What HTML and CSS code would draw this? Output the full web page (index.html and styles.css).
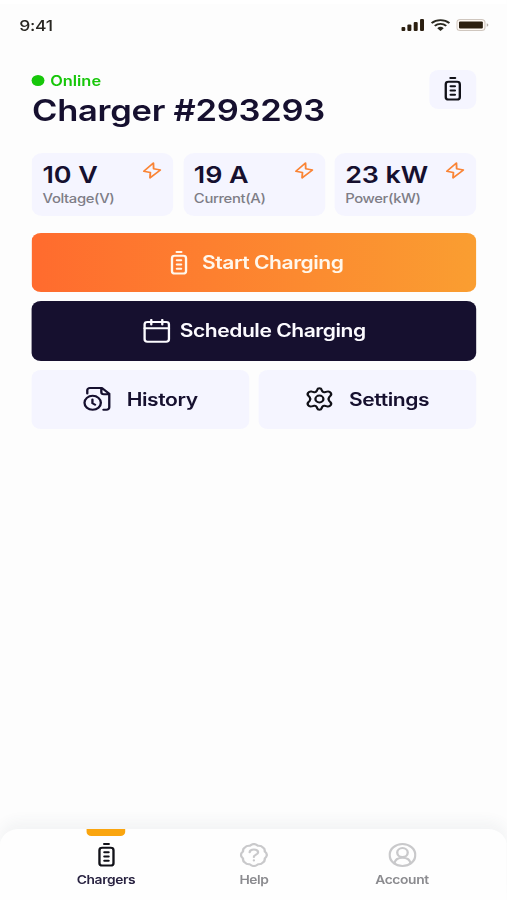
FILE: index.html
```html
<!DOCTYPE html>
<html lang="en">
<head>
<meta charset="utf-8">
<title>Charger</title>
<link rel="stylesheet" href="styles.css">
</head>
<body>
<svg class="defs" width="0" height="0" aria-hidden="true">
  <symbol id="battery" viewBox="0 0 24 24">
    <rect x="6" y="4.8" width="12" height="17.8" rx="2.4"/>
    <path d="M10 1h4M10.2 9.3h3.6M10.2 13.5h3.6M10.2 17.7h3.6"/>
  </symbol>
  <symbol id="bolt" viewBox="0 0 16 17">
    <path d="M9.1 1 .9 9.3l5.6 1.2L6.2 15.9l8.9-7.9-5.8-1.2z"/>
  </symbol>
</svg>
<div class="screen">
  <header class="status">
    <span class="time">9:41</span>
    <div class="signals">
      <svg class="cell" viewBox="0 0 20 12"><rect x="0" y="8" width="3.4" height="4" rx="1"/><rect x="5.2" y="5.6" width="3.4" height="6.4" rx="1"/><rect x="10.6" y="3" width="3.4" height="9" rx="1"/><rect x="16" y="0" width="3.4" height="12" rx="1"/></svg>
      <svg class="wifi" viewBox="0 0 17 12"><path d="M.9 4.1a11 11 0 0 1 15.2 0M3.6 6.9a7.1 7.1 0 0 1 9.8 0"/><path class="solid" d="M5.7 9.2a4 4 0 0 1 5.6 0L8.5 12z"/></svg>
      <svg class="power" viewBox="0 0 28 12"><rect class="shell" x=".5" y=".5" width="24" height="11" rx="3"/><rect x="2.3" y="2.4" width="20.4" height="7.2" rx="1"/><path class="tip" d="M26 4.2v3.6q1.4-.5 1.4-1.8T26 4.2z"/></svg>
    </div>
  </header>

  <main class="content">
    <section class="heading">
      <div>
        <p class="online"><i class="dot"></i>Online</p>
        <h1>Charger #293293</h1>
      </div>
      <button class="device"><svg class="icon ink"><use href="#battery"/></svg></button>
    </section>

    <section class="stats">
      <article class="stat"><div><strong>10 V</strong><span>Voltage(V)</span></div><svg class="bolt"><use href="#bolt"/></svg></article>
      <article class="stat"><div><strong>19 A</strong><span>Current(A)</span></div><svg class="bolt"><use href="#bolt"/></svg></article>
      <article class="stat"><div><strong>23 kW</strong><span>Power(kW)</span></div><svg class="bolt"><use href="#bolt"/></svg></article>
    </section>

    <button class="action start"><svg class="icon"><use href="#battery"/></svg><span>Start Charging</span></button>
    <button class="action schedule">
      <svg class="icon" viewBox="0 0 24 24"><rect x="1.6" y="3" width="20.8" height="19.7" rx="2.4"/><path d="M1.6 9.2h20.8M7.3 .9v4.6M16.7 .9v4.6"/></svg>
      <span>Schedule Charging</span>
    </button>
    <div class="pair">
      <button class="action soft">
        <svg class="icon" viewBox="0 0 24 24"><path d="M3.6 6.6V3.2A2.2 2.2 0 0 1 5.8 1h10.3l6.3 5.8v13.4a2.4 2.4 0 0 1-2.4 2.5h-2.6M15.6 1v4a2.2 2.2 0 0 0 2.2 2.2h4.6"/><circle cx="8.2" cy="15.8" r="7"/><path d="M8 12.4v3.8l2.3 1.6"/></svg>
        <span>History</span>
      </button>
      <button class="action soft">
        <svg class="icon ink" viewBox="0 0 24 24"><circle cx="12" cy="12" r="3.4"/><path d="M10.1 2.7Q10.5 1.2 12 1.2T13.9 2.7L14.4 4.2Q15 5.5 16.4 5.2L18.6 4.6Q20.6 4.1 21.6 5.8T21.4 8.7L20.3 10.3Q19.2 12 20.3 13.7L21.4 15.3Q22.6 16.6 21.6 18.2T18.6 19.4L16.4 18.8Q15 18.5 14.4 19.8L13.9 21.3Q13.5 22.8 12 22.8T10.1 21.3L9.6 19.8Q9 18.5 7.6 18.8L5.4 19.4Q3.4 19.9 2.4 18.2T2.6 15.3L3.7 13.7Q4.8 12 3.7 10.3L2.6 8.7Q1.4 7.4 2.4 5.8T5.4 4.6L7.6 5.2Q9 5.5 9.6 4.2Z"/></svg>
        <span>Settings</span>
      </button>
    </div>
  </main>

  <nav class="tabs">
    <a class="tab active"><svg class="icon ink"><use href="#battery"/></svg><span>Chargers</span></a>
    <a class="tab">
      <svg class="icon" viewBox="0 0 24 24"><path d="M12 .9Q13.8 1 15.4 2.7Q18.4 2.4 19.6 4.4Q21.6 5.7 21.3 8.6Q23.1 10.2 23.1 12Q23.1 13.8 21.3 15.4Q21.6 18.3 19.6 19.6Q18.4 21.6 15.4 21.3Q13.8 23.1 12 23.1Q10.2 23.1 8.6 21.3Q5.6 21.6 4.4 19.6Q2.4 18.3 2.7 15.4Q.9 13.8 .9 12Q.9 10.2 2.7 8.6Q2.4 5.7 4.4 4.4Q5.6 2.4 8.6 2.7Q10.2 1 12 .9Z"/><path d="M8.4 9.2Q8.6 6.5 12 6.5T15.6 9.3Q15.6 11 13.6 11.8Q12 12.5 12 14M12 17.3v.3"/></svg>
      <span>Help</span>
    </a>
    <a class="tab">
      <svg class="icon" viewBox="0 0 24 24"><circle cx="12" cy="12" r="11"/><circle cx="12" cy="9.6" r="4.5"/><path d="M5 20.4Q6 14.8 12 14.8T19 20.4"/></svg>
      <span>Account</span>
    </a>
  </nav>
</div>
</body>
</html>
```

FILE: styles.css
```css
:root {
  --stretch: 1.17;
  --ink: #16102f;
  --soft: #f5f5ff;
  --gap: 8.5px;
}

* { box-sizing: border-box; }

body {
  margin: 0;
  overflow: hidden;
  background: #fdfdfd;
  font-family: Inter, "Liberation Sans", sans-serif;
}

h1, p { margin: 0; }

button {
  border: 0;
  padding: 0;
  font: inherit;
}

.defs { position: absolute; }

/* The interface is drawn with horizontally widened proportions. */
.screen {
  display: flex;
  flex-direction: column;
  width: calc(100vw / var(--stretch));
  height: 100vh;
  transform: scaleX(var(--stretch));
  transform-origin: 0 0;
  border-top: 4px solid #fff;
}

.status {
  display: flex;
  justify-content: space-between;
  align-items: center;
  height: 42px;
  padding: 0 15px 0 16.5px;
}

.time {
  font-size: 15px;
  font-weight: 500;
  letter-spacing: -.3px;
  color: #292722;
}

.signals {
  display: flex;
  align-items: center;
  gap: 5px;
  fill: #2b1f10;
}

.cell { width: 20px; height: 12px; }
.wifi { width: 17px; height: 12px; }
.wifi path { fill: none; stroke: #2b2a20; stroke-width: 1.8; }
.wifi .solid { fill: #2b2a20; stroke: none; }
.power { width: 28px; height: 12px; }
.shell { fill: #fffaf5; stroke: #cfc6be; }
.tip { fill: #b5aea8; }

.content {
  display: flex;
  flex-direction: column;
  gap: 9px;
  padding: 24px 26.5px 0 27.4px;
}

.heading {
  display: flex;
  justify-content: space-between;
  height: 74px;
}

.online {
  display: flex;
  align-items: center;
  gap: 4.5px;
  height: 21px;
  font-size: 14px;
  font-weight: 600;
  line-height: 21px;
  color: #17c70a;
}

.dot {
  width: 11px;
  height: 11px;
  border-radius: 50%;
  background: #17c70a;
}

h1 {
  font-size: 29.5px;
  font-weight: 600;
  line-height: 39px;
  letter-spacing: -.23px;
  white-space: nowrap;
  color: var(--ink);
}

.device {
  display: grid;
  place-items: center;
  width: 40px;
  height: 39px;
  padding-bottom: 1px;
  border-radius: 8px;
  background: var(--soft);
}

.icon {
  flex: none;
  width: 24px;
  height: 24px;
  fill: none;
  stroke: currentColor;
  stroke-width: 2;
  stroke-linecap: round;
  stroke-linejoin: round;
}

.ink { color: #111118; }

.stats {
  display: grid;
  grid-template-columns: repeat(3, 1fr);
  gap: var(--gap);
  height: 63px;
  margin-bottom: 8px;
}

.stat {
  display: flex;
  justify-content: space-between;
  padding: 9px 10px 0 9px;
  border-radius: 9px;
  background: var(--soft);
}

.stat strong, .stat span {
  display: block;
  white-space: nowrap;
}

.stat strong {
  font-size: 23px;
  font-weight: 600;
  line-height: 27px;
  letter-spacing: -.1px;
  color: var(--ink);
}

.stat span {
  font-size: 12.7px;
  font-weight: 500;
  line-height: 20px;
  letter-spacing: -.32px;
  color: #7e7d86;
}

.bolt {
  width: 16px;
  height: 17px;
  margin: -.5px 0 0 -16px;
  fill: none;
  stroke: #fa8435;
  stroke-width: 1.6;
  stroke-linejoin: round;
}

.action {
  display: flex;
  align-items: center;
  justify-content: center;
  gap: 8px;
  height: 59.3px;
  border-radius: 8px;
  font-size: 18px;
  font-weight: 600;
  letter-spacing: -.4px;
  white-space: nowrap;
}

.start {
  color: #fff7ec;
  background: linear-gradient(90deg, #ff6b2e, #fa9e31);
}

.schedule { color: #fcfbff; background: var(--ink); }

.pair {
  display: grid;
  grid-template-columns: 1fr 1fr;
  gap: var(--gap);
}

.soft {
  gap: 13px;
  letter-spacing: -.35px;
  color: var(--ink);
  background: var(--soft);
}

.tabs {
  display: grid;
  grid-template-columns: repeat(3, 1fr);
  height: 71px;
  margin-top: auto;
  padding: 0 26.5px 0 27.4px;
  border-radius: 16px 16px 0 0;
  background: #fefefe;
  box-shadow: 0 -8px 12px rgba(60, 75, 95, .05);
}

.tab {
  position: relative;
  display: flex;
  flex-direction: column;
  align-items: center;
  padding-top: 14px;
  color: #c9c9cb;
}

.tab span {
  margin-top: 5px;
  font-size: 11.8px;
  font-weight: 600;
  line-height: 17px;
  letter-spacing: -.32px;
  color: #8b8b8f;
}

.tab.active span { color: #292341; }

.tab.active::before {
  content: "";
  position: absolute;
  top: 0;
  width: 33.5px;
  height: 6.5px;
  border-radius: 0 0 4px 4px;
  background: #faa50f;
}
```
